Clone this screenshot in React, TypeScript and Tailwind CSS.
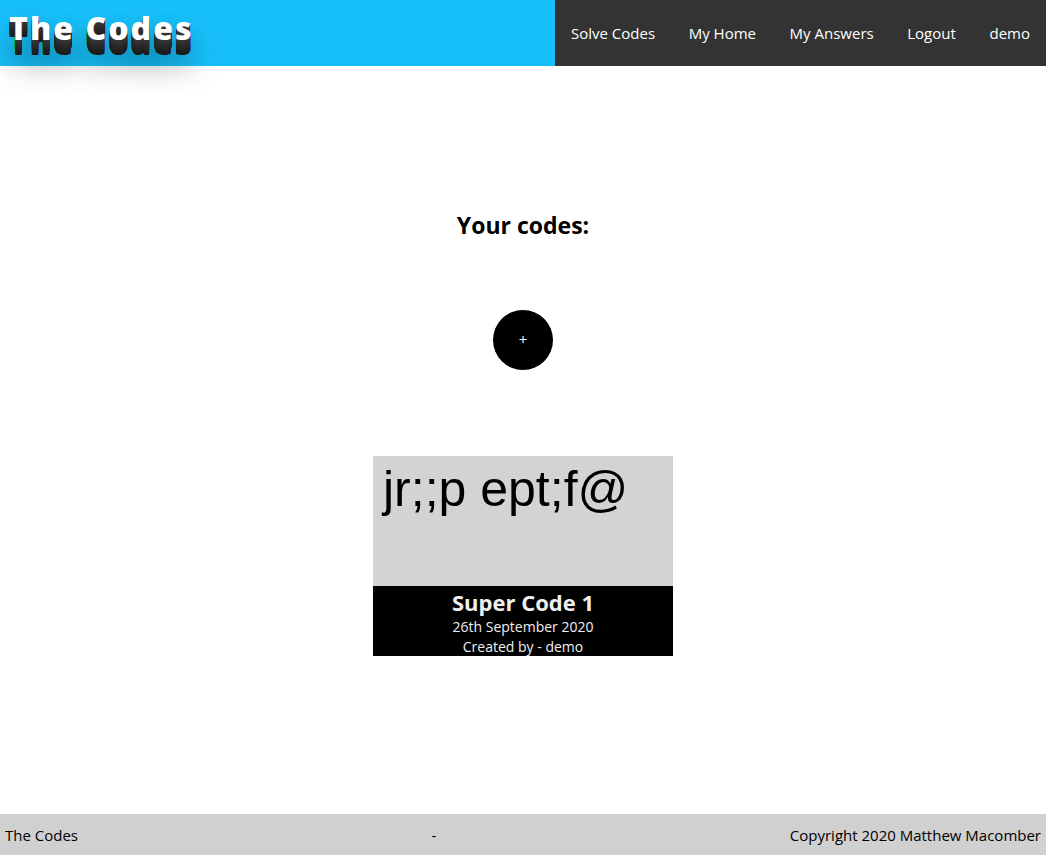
import React from 'react';

const links = ['Solve Codes', 'My Home', 'My Answers', 'Logout', 'demo'];

export default function App() {
  return (
    <div className="flex min-h-screen flex-col bg-white font-['Open_Sans','Noto_Sans',sans-serif] text-[15px] leading-5 text-black">
      <header className="flex h-[66px] bg-[#18c0fa]">
        <a href="#top" className="flex-1 px-[9px] pt-2">
          <h1 className="text-[32px] leading-10 font-extrabold tracking-[2px] whitespace-nowrap text-white [text-shadow:0_1px_0_#353535,0_2px_0_#333333,0_3px_0_#313131,0_4px_0_#2f2f2f,0_5px_0_#2d2d2d,0_6px_0_#2b2b2b,0_7px_0_#292929,0_8px_0_#272727,0_9px_0_#252525,0_10px_0_#232323,0_11px_0_#212121,0_12px_0_#1f1f1f,0_13px_0_#1d1d1d,0_14px_0_#1b1b1b,0_15px_0_#191919,0_22px_30px_rgba(0,0,0,0.7)]">
            The Codes
          </h1>
        </a>
        <nav className="flex min-w-[491px] justify-between bg-[#333333] text-white">
          {links.map((label) => (
            <a key={label} href="#top" className="flex items-center px-4">
              {label}
            </a>
          ))}
        </nav>
      </header>
      <main className="flex flex-1 flex-col items-center pt-[143px]">
        <h2 className="text-[23px] leading-8 font-bold">Your codes:</h2>
        <button type="button" aria-label="Add code" className="mt-[69px] size-15 rounded-full bg-black pb-0.5 text-white">
          +
        </button>
        <article className="mt-[86px] w-[300px] bg-[#d3d3d3]">
          <p className="h-[130px] px-2.5 pt-[5px] font-['Liberation_Sans',sans-serif] text-[50px] leading-[57px]">
            jr;;p ept;f@
          </p>
          <div className="bg-black text-center text-[14px] text-[#f0f0f0]">
            <h3 className="pt-px text-[22px] leading-[30px] font-bold">Super Code 1</h3>
            <p>26th September 2020</p>
            <p className="h-[19px]">Created by - demo</p>
          </div>
        </article>
      </main>
      <footer className="flex h-[41px] items-center justify-between bg-[#d0d0d0] px-[5px]">
        <span>The Codes</span>
        <span>-</span>
        <span>Copyright 2020 Matthew Macomber</span>
      </footer>
    </div>
  );
}
